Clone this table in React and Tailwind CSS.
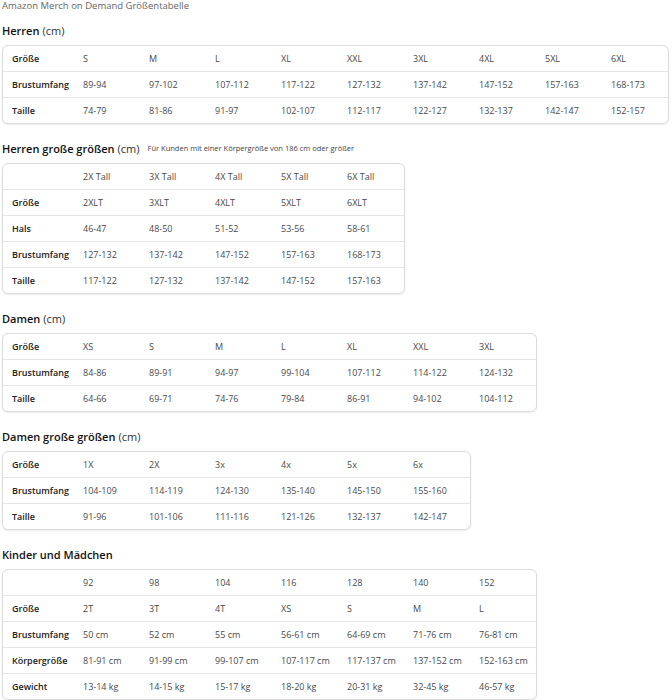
const herren = {
  cols: "grid-cols-[71px_repeat(9,66px)]",
  rows: [
    ["Größe", "S", "M", "L", "XL", "XXL", "3XL", "4XL", "5XL", "6XL"],
    ["Brustumfang", "89-94", "97-102", "107-112", "117-122", "127-132", "137-142", "147-152", "157-163", "168-173"],
    ["Taille", "74-79", "81-86", "91-97", "102-107", "112-117", "122-127", "132-137", "142-147", "152-157"],
  ],
}

const herrenTall = {
  cols: "grid-cols-[71px_repeat(5,66px)]",
  rows: [
    ["", "2X Tall", "3X Tall", "4X Tall", "5X Tall", "6X Tall"],
    ["Größe", "2XLT", "3XLT", "4XLT", "5XLT", "6XLT"],
    ["Hals", "46-47", "48-50", "51-52", "53-56", "58-61"],
    ["Brustumfang", "127-132", "137-142", "147-152", "157-163", "168-173"],
    ["Taille", "117-122", "127-132", "137-142", "147-152", "157-163"],
  ],
}

const damen = {
  cols: "grid-cols-[71px_repeat(7,66px)]",
  rows: [
    ["Größe", "XS", "S", "M", "L", "XL", "XXL", "3XL"],
    ["Brustumfang", "84-86", "89-91", "94-97", "99-104", "107-112", "114-122", "124-132"],
    ["Taille", "64-66", "69-71", "74-76", "79-84", "86-91", "94-102", "104-112"],
  ],
}

const damenPlus = {
  cols: "grid-cols-[71px_repeat(6,66px)]",
  rows: [
    ["Größe", "1X", "2X", "3x", "4x", "5x", "6x"],
    ["Brustumfang", "104-109", "114-119", "124-130", "135-140", "145-150", "155-160"],
    ["Taille", "91-96", "101-106", "111-116", "121-126", "132-137", "142-147"],
  ],
}

const kinder = {
  cols: "grid-cols-[71px_repeat(7,66px)]",
  rows: [
    ["", "92", "98", "104", "116", "128", "140", "152"],
    ["Größe", "2T", "3T", "4T", "XS", "S", "M", "L"],
    ["Brustumfang", "50 cm", "52 cm", "55 cm", "56-61 cm", "64-69 cm", "71-76 cm", "76-81 cm"],
    ["Körpergröße", "81-91 cm", "91-99 cm", "99-107 cm", "107-117 cm", "117-137 cm", "137-152 cm", "152-163 cm"],
    ["Gewicht", "13-14 kg", "14-15 kg", "15-17 kg", "18-20 kg", "20-31 kg", "32-45 kg", "46-57 kg"],
  ],
}

const SizeTable = ({ data }) => {
  return (
    <div className="w-fit rounded-[6px] border border-[#dcdcdc] bg-white shadow-[0_1px_2px_rgba(0,0,0,0.08)]">
      {data.rows.map((row, i) => (
        <div
          key={i}
          className={`grid ${data.cols} items-center ${i < data.rows.length - 1 ? "h-[26px] border-b border-[#e6e6e6]" : "h-[25px]"}`}
        >
          {row.map((cell, j) => (
            <div
              key={j}
              className={`pl-[9px] whitespace-nowrap ${j === 0 ? "font-semibold text-[#222]" : "text-[#4a4a4a]"}`}
            >
              {cell}
            </div>
          ))}
        </div>
      ))}
    </div>
  )
}

const Heading = ({ title, unit, note }) => (
  <div className="flex items-center h-[16px] mb-[6px] whitespace-nowrap">
    <span className="text-[11px] font-semibold text-[#111]">{title}</span>
    {unit && <span className="text-[11px] text-[#333] ml-[3px]">{unit}</span>}
    {note && <span className="text-[7.5px] text-[#444] ml-[8px]">{note}</span>}
  </div>
)

export default function App() {
  return (
    <div className="w-[672px] min-h-[700px] bg-white px-[2px] font-['Open_Sans',sans-serif] text-[9px]">
      <div className="h-[12px] leading-[12px] text-[9.5px] text-[#666]">
        Amazon Merch on Demand Größentabelle
      </div>

      <div className="mt-[11px]">
        <Heading title="Herren" unit="(cm)" />
        <SizeTable data={herren} />
      </div>

      <div className="mt-[17px]">
        <Heading title="Herren große größen" unit="(cm)" note="Für Kunden mit einer Körpergröße von 186 cm oder größer" />
        <SizeTable data={herrenTall} />
      </div>

      <div className="mt-[17px]">
        <Heading title="Damen" unit="(cm)" />
        <SizeTable data={damen} />
      </div>

      <div className="mt-[17px]">
        <Heading title="Damen große größen" unit="(cm)" />
        <SizeTable data={damenPlus} />
      </div>

      <div className="mt-[17px]">
        <Heading title="Kinder und Mädchen" />
        <SizeTable data={kinder} />
      </div>
    </div>
  )
}
